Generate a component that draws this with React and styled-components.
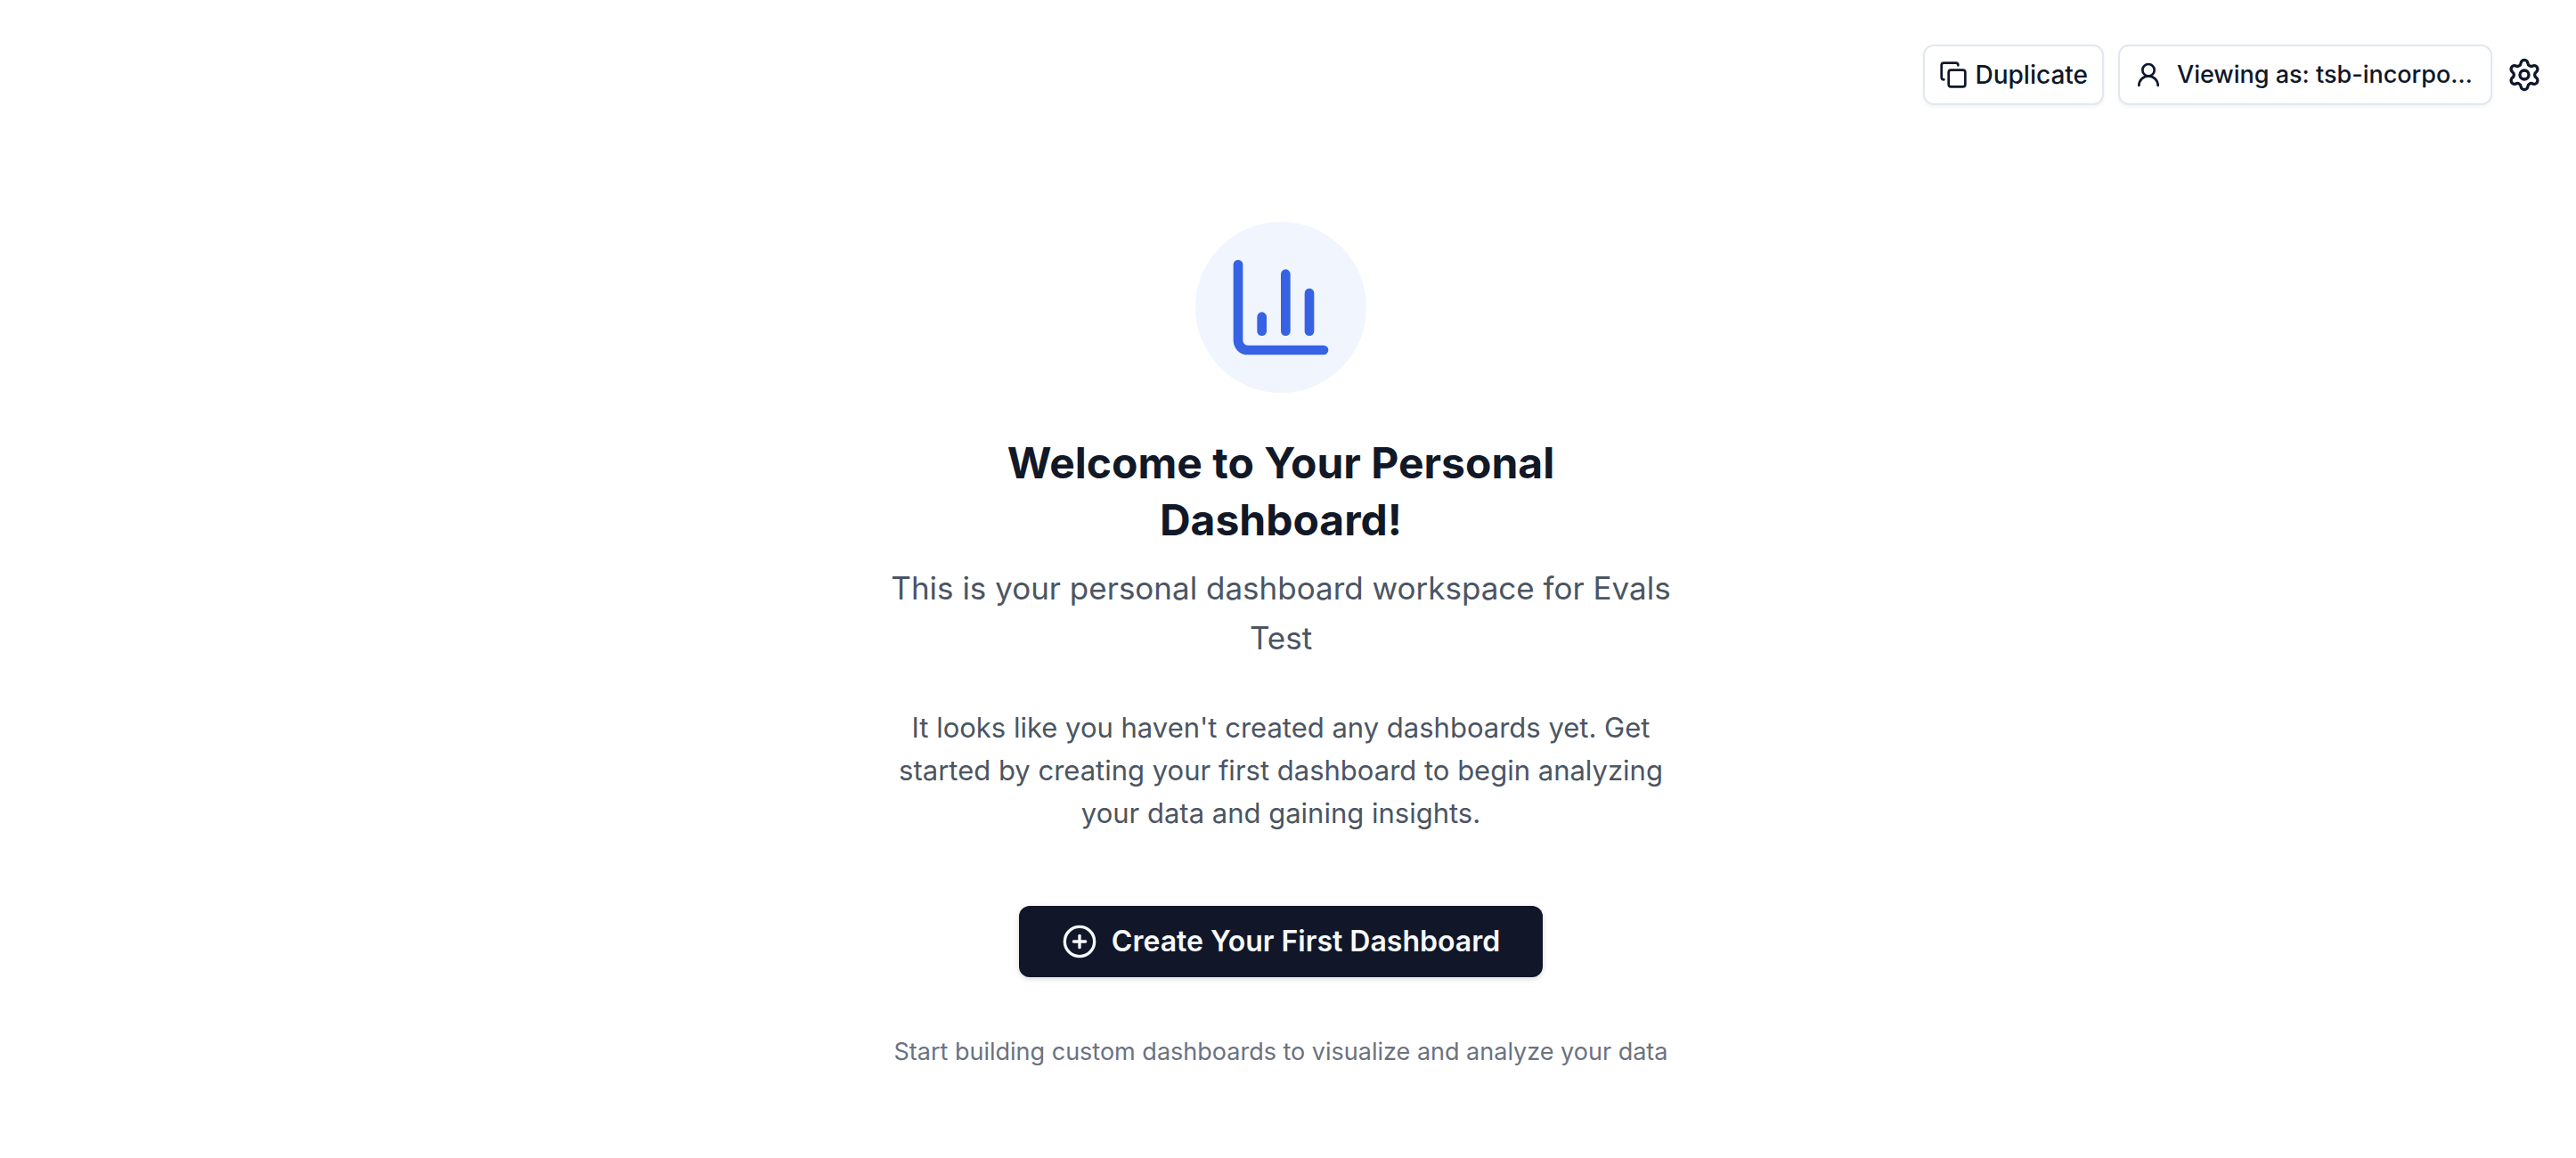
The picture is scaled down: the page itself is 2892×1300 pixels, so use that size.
import React from "react";
import styled, { createGlobalStyle } from "styled-components";
import { ChartColumn, CirclePlus, Copy, Settings, UserRound } from "lucide-react";

const GlobalStyle = createGlobalStyle`
  *, *::before, *::after {
    box-sizing: border-box;
  }
  body {
    margin: 0;
    background: #ffffff;
    color: #0f172a;
    font-family: Inter, "Liberation Sans", sans-serif;
    -webkit-font-smoothing: antialiased;
  }
  h1, p {
    margin: 0;
  }
`;

const Page = styled.div`
  min-height: 100vh;
  padding-right: 16px;
`;

const Toolbar = styled.header`
  display: flex;
  justify-content: flex-end;
  align-items: center;
  gap: 16px;
  padding: 50px 22px 0 24px;
`;

const Button = styled.button`
  display: inline-flex;
  align-items: center;
  border-radius: 12px;
  font-family: inherit;
  cursor: pointer;

  svg {
    flex: none;
  }
`;

const OutlineButton = styled(Button)`
  height: 68px;
  gap: ${(p) => p.$gap}px;
  padding: 0 16px;
  border: 2px solid #e2e8f0;
  background: #ffffff;
  box-shadow: 0 2px 4px rgba(0, 0, 0, 0.05);
  color: #0f172a;
  font-size: ${(p) => p.$size}px;
  font-weight: 500;
  line-height: 40px;
`;

const ViewingLabel = styled.span`
  width: 336px;
  overflow: hidden;
  text-align: left;
  text-overflow: ellipsis;
  white-space: nowrap;
`;

const IconButton = styled(Button)`
  padding: 0;
  border: 0;
  background: none;
  color: #0f172a;
`;

const Empty = styled.main`
  display: flex;
  flex-direction: column;
  align-items: center;
  max-width: 896px;
  margin: 0 auto;
  padding-top: 131px;
  text-align: center;
`;

const Badge = styled.div`
  display: flex;
  padding: 32px;
  border-radius: 50%;
  background: #f0f5fe;
  color: #3662e3;
`;

const Title = styled.h1`
  max-width: 800px;
  margin-top: 47px;
  color: #111827;
  font-size: 48px;
  font-weight: 700;
  line-height: 64px;
`;

const Lead = styled.p`
  margin-top: 16px;
  color: #4b5563;
  font-size: 35px;
  line-height: 56px;
`;

const Body = styled.p`
  margin-top: 49px;
  color: #4b5563;
  font-size: 31px;
  line-height: 48px;
`;

const PrimaryButton = styled(Button)`
  height: 80px;
  margin-top: 80px;
  gap: 16px;
  padding: 0 48px;
  border: 0;
  background: #111729;
  box-shadow: 0 2px 6px rgba(0, 0, 0, 0.15);
  color: #f8fafc;
  font-size: 32px;
  font-weight: 600;
  line-height: 48px;
`;

const Hint = styled.p`
  margin-top: 64px;
  color: #6b7280;
  font-size: 27px;
  line-height: 40px;
`;

export default function App() {
  return (
    <Page>
      <GlobalStyle />
      <Toolbar>
        <OutlineButton type="button" $gap={8} $size={28}>
          <Copy size={32} strokeWidth={2} />
          Duplicate
        </OutlineButton>
        <OutlineButton type="button" $gap={16} $size={27}>
          <UserRound size={32} strokeWidth={2} />
          <ViewingLabel>Viewing as: tsb-incorpo…</ViewingLabel>
        </OutlineButton>
        <IconButton type="button" aria-label="Settings">
          <Settings size={40} strokeWidth={2} />
        </IconButton>
      </Toolbar>
      <Empty>
        <Badge>
          <ChartColumn size={128} strokeWidth={2} />
        </Badge>
        <Title>Welcome to Your Personal Dashboard!</Title>
        <Lead>This is your personal dashboard workspace for Evals Test</Lead>
        <Body>
          It looks like you haven't created any dashboards yet. Get started by
          creating your first dashboard to begin analyzing your data and gaining
          insights.
        </Body>
        <PrimaryButton type="button">
          <CirclePlus size={40} strokeWidth={2} />
          Create Your First Dashboard
        </PrimaryButton>
        <Hint>Start building custom dashboards to visualize and analyze your data</Hint>
      </Empty>
    </Page>
  );
}
